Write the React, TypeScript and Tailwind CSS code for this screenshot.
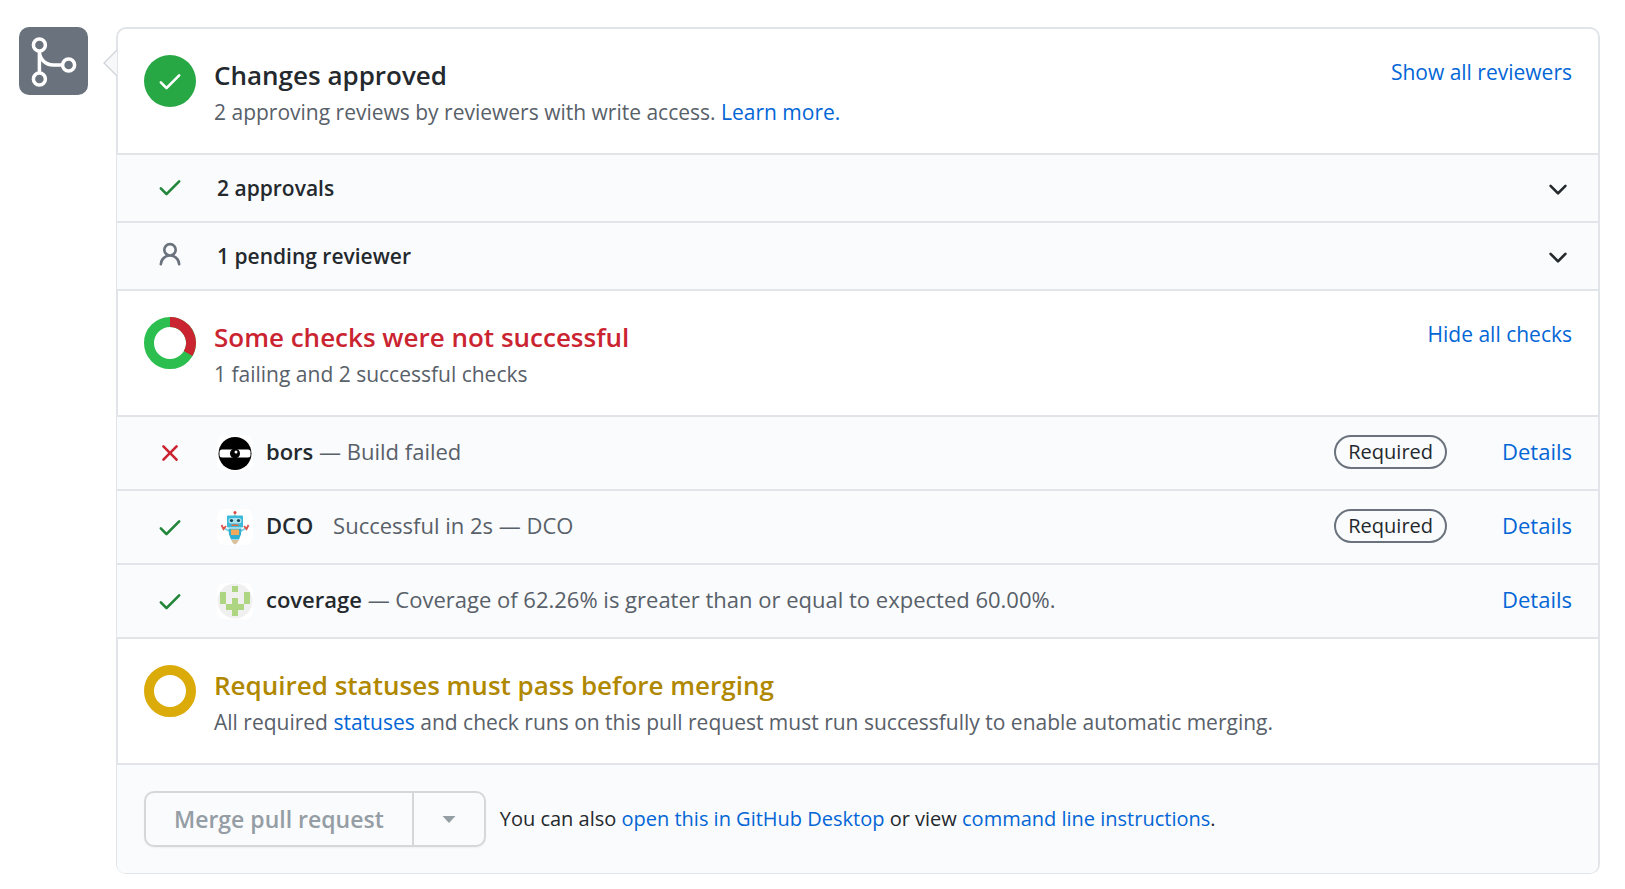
import type { ReactNode } from "react";

const CHECK =
  "M13.78 4.22a.75.75 0 010 1.06l-7.25 7.25a.75.75 0 01-1.06 0L2.22 9.28a.75.75 0 011.06-1.06L6 10.94l6.72-6.72a.75.75 0 011.06 0z";
const CROSS =
  "M3.72 3.72a.75.75 0 011.06 0L8 6.94l3.22-3.22a.75.75 0 111.06 1.06L9.06 8l3.22 3.22a.75.75 0 11-1.06 1.06L8 9.06l-3.22 3.22a.75.75 0 01-1.06-1.06L6.94 8 3.72 4.78a.75.75 0 010-1.06z";
const PERSON =
  "M10.5 5a2.5 2.5 0 11-5 0 2.5 2.5 0 015 0zm.061 3.073a4 4 0 10-5.123 0 6.004 6.004 0 00-3.431 5.142.75.75 0 001.498.07 4.5 4.5 0 018.99 0 .75.75 0 101.498-.07 6.005 6.005 0 00-3.432-5.142z";
const CHEVRON =
  "M12.78 6.22a.75.75 0 010 1.06l-4.25 4.25a.75.75 0 01-1.06 0L3.22 7.28a.75.75 0 011.06-1.06L8 9.94l3.72-3.72a.75.75 0 011.06 0z";

function Icon({ d, className = "" }: { d: string; className?: string }) {
  return (
    <svg viewBox="0 0 16 16" className={`size-7 fill-current ${className}`} aria-hidden="true">
      <path d={d} />
    </svg>
  );
}

function Link({ children }: { children: ReactNode }) {
  return (
    <a href="#" className="text-[#0366d6] hover:underline">
      {children}
    </a>
  );
}

function MergeIcon() {
  return (
    <svg viewBox="0 0 69 68" className="h-[68px] w-[69px]" fill="none" stroke="#fff" strokeWidth="3.5" aria-hidden="true">
      <circle cx="20.4" cy="18" r="6" />
      <circle cx="20.4" cy="52" r="6" />
      <circle cx="49.6" cy="38" r="6" />
      <path d="M20.4 24v22M20.4 24c0 8 6 14 14 14h9" />
    </svg>
  );
}

function SuccessBadge() {
  return (
    <div className="flex size-[52px] items-center justify-center rounded-full bg-[#28a745] text-white">
      <Icon d={CHECK} />
    </div>
  );
}

function Ring({ base, failing = false }: { base: string; failing?: boolean }) {
  return (
    <svg viewBox="0 0 52 52" className="size-[52px]" fill="none" strokeWidth="10" aria-hidden="true">
      <circle cx="26" cy="26" r="21" stroke={base} />
      {failing && <path d="M26 5a21 21 0 0 1 18.19 31.5" stroke="#cb2431" />}
    </svg>
  );
}

function BorsAvatar() {
  return (
    <svg viewBox="0 0 36 36" className="size-9 rounded-lg bg-white" aria-hidden="true">
      <circle cx="18" cy="18.5" r="16.5" fill="#000" />
      <rect x="2.5" y="14.5" width="31" height="8" rx="2.5" fill="#fff" />
      <circle cx="18" cy="18.5" r="5" fill="#000" />
      <circle cx="19" cy="17" r="1.5" fill="#fff" />
    </svg>
  );
}

function RobotAvatar() {
  return (
    <svg viewBox="0 0 36 36" className="size-9 rounded-lg bg-white" aria-hidden="true">
      <path d="M18 3v4" stroke="#8a8f98" strokeWidth="1" />
      <circle cx="18" cy="3.5" r="1.5" fill="#e0483e" />
      <rect x="10" y="6.5" width="16" height="12" rx="1" fill="#3bb9d8" />
      <rect x="11.5" y="9" width="13" height="5.5" rx="2.5" fill="#a9e3ee" />
      <circle cx="14.5" cy="11.5" r="1.6" fill="#17465c" />
      <circle cx="21.5" cy="11.5" r="1.6" fill="#17465c" />
      <rect x="14.5" y="15.5" width="7" height="1.5" fill="#e2673f" />
      <path d="M12 22l-5-3M24 22l5-3" stroke="#7fcfe2" strokeWidth="2" />
      <path d="M11.5 19.5h13l-.5 6-2 5h-8l-2-5z" fill="#2fb0d3" />
      <rect x="14" y="20.5" width="8" height="5.5" fill="#f3a95c" />
      <path d="M4.5 16l2 4 2.500-3M31.500 16l-2 4-2.500-3" stroke="#d9534a" strokeWidth="1.8" fill="none" />
      <path d="M14 31h8l-2 3-2 1.5-2-1.5z" fill="#d9bf9a" />
    </svg>
  );
}

function IdenticonAvatar() {
  return (
    <svg viewBox="0 0 36 36" className="size-9 rounded-lg bg-white" aria-hidden="true">
      <circle cx="18" cy="18" r="17.5" fill="#f0f0f0" />
      <path
        d="M15 3h6v6h-6zM3 9h6v12H3zM27 9h6v12h-6zM15 15h6v6h6v6h-6v6h-6v-6H9v-6h6z"
        fill="#aed581"
      />
    </svg>
  );
}

function Summary({
  icon,
  title,
  tone,
  action,
  children,
}: {
  icon: ReactNode;
  title: string;
  tone: string;
  action?: string;
  children: ReactNode;
}) {
  return (
    <section className="flex items-start gap-[18px] px-[26px] pt-[26px] pb-6">
      <div className="shrink-0">{icon}</div>
      <div className="min-w-0 flex-1">
        <h3 className={`text-[26px] leading-10 font-semibold ${tone}`}>{title}</h3>
        <p className="text-[21px] leading-[34px] text-[#586069]">{children}</p>
      </div>
      {action && (
        <button
          type="button"
          className="shrink-0 cursor-pointer text-[21px] leading-[34px] text-[#0366d6] hover:underline"
        >
          {action}
        </button>
      )}
    </section>
  );
}

function ReviewRow({ icon, tone, label }: { icon: string; tone: string; label: string }) {
  return (
    <button
      type="button"
      className="-ml-px flex cursor-pointer items-center border-t-2 border-[#e1e4e8] bg-[#fafbfc] py-4 pr-[26px] pl-[27px] text-left text-[#24292e]"
    >
      <span className={`flex w-[52px] justify-center pb-0.5 ${tone}`}>
        <Icon d={icon} />
      </span>
      <span className="ml-[21px] flex-1 text-[21px] leading-[34px] font-semibold">{label}</span>
      <Icon d={CHEVRON} />
    </button>
  );
}

function CheckRow({
  passed,
  avatar,
  name,
  detail,
  required = false,
}: {
  passed: boolean;
  avatar: ReactNode;
  name: string;
  detail: ReactNode;
  required?: boolean;
}) {
  return (
    <li className="-ml-px flex items-start border-t-2 border-[#e1e4e8] bg-[#fafbfc] py-[18px] pr-[26px] pl-[27px] text-[22px] leading-8">
      <span className={`flex w-[52px] justify-center self-center ${passed ? "text-[#22863a]" : "text-[#cb2431]"}`}>
        <Icon d={passed ? CHECK : CROSS} />
      </span>
      <span className="ml-[21px]">{avatar}</span>
      <p className="ml-[13px] flex-1 text-[#586069]">
        <strong className="font-semibold text-[#24292e]">{name}</strong> {detail}
      </p>
      {required && (
        <span className="mr-[55px] rounded-full border-2 border-[#6a737d] px-3 text-[20px] leading-[30px] font-medium text-[#24292e]">
          Required
        </span>
      )}
      <Link>Details</Link>
    </li>
  );
}

export default function App() {
  return (
    <main className="flex min-h-screen items-start bg-white pt-[27px] pr-[25px] pb-4 pl-[19px] font-['Open_Sans','Noto_Sans',sans-serif]">
      <div className="shrink-0 rounded-[10px] bg-[#6a737d]">
        <MergeIcon />
      </div>
      <div className="relative ml-7 flex min-w-0 flex-1 flex-col rounded-[10px] border-2 border-b border-[#e1e4e8]">
        <svg viewBox="0 0 14 28" className="absolute top-5 -left-[15px] h-7 w-3.5" aria-hidden="true">
          <path d="M14 1L1 14l13 13" fill="#f6f8fa" stroke="#d1d5da" strokeWidth="1.3" />
        </svg>
        <Summary icon={<SuccessBadge />} title="Changes approved" tone="text-[#24292e]" action="Show all reviewers">
          2 approving reviews by reviewers with write access. <Link>Learn more.</Link>
        </Summary>
        <ReviewRow icon={CHECK} tone="text-[#22863a]" label="2 approvals" />
        <ReviewRow icon={PERSON} tone="text-[#6a737d]" label="1 pending reviewer" />
        <div className="border-t-2 border-[#e1e4e8]">
          <Summary
            icon={<Ring base="#2cbe4e" failing />}
            title="Some checks were not successful"
            tone="text-[#cb2431]"
            action="Hide all checks"
          >
            1 failing and 2 successful checks
          </Summary>
        </div>
        <ul>
          <CheckRow passed={false} avatar={<BorsAvatar />} name="bors" detail="— Build failed" required />
          <CheckRow
            passed
            avatar={<RobotAvatar />}
            name="DCO"
            detail={<span className="ml-3.5">Successful in 2s — DCO</span>}
            required
          />
          <CheckRow
            passed
            avatar={<IdenticonAvatar />}
            name="coverage"
            detail="— Coverage of 62.26% is greater than or equal to expected 60.00%."
          />
        </ul>
        <div className="border-t-2 border-[#e1e4e8]">
          <Summary
            icon={<Ring base="#dbab09" />}
            title="Required statuses must pass before merging"
            tone="text-[#b08800]"
          >
            All required <Link>statuses</Link> and check runs on this pull request must run successfully to enable
            automatic merging.
          </Summary>
        </div>
        <footer className="-ml-px flex items-center gap-3.5 rounded-b-[8px] border-t-2 border-[#e1e4e8] bg-[#fafbfc] py-[26px] pr-[26px] pl-[27px]">
          <div className="flex shrink-0 rounded-[10px] border-2 border-[#d5d8da] text-[#959da5] shadow-xs">
            <button type="button" disabled className="px-7 text-[23px] leading-[52px] font-semibold">
              Merge pull request
            </button>
            <button
              type="button"
              disabled
              aria-label="Select merge method"
              className="flex items-center border-l-2 border-[#d5d8da] px-7"
            >
              <svg viewBox="0 0 14 8" className="h-2 w-3.5 fill-current" aria-hidden="true">
                <path d="M0.500 1h13L7 8z" />
              </svg>
            </button>
          </div>
          <p className="text-[20px] leading-8 text-[#24292e]">
            You can also <Link>open this in GitHub Desktop</Link> or view <Link>command line instructions</Link>.
          </p>
        </footer>
      </div>
    </main>
  );
}
